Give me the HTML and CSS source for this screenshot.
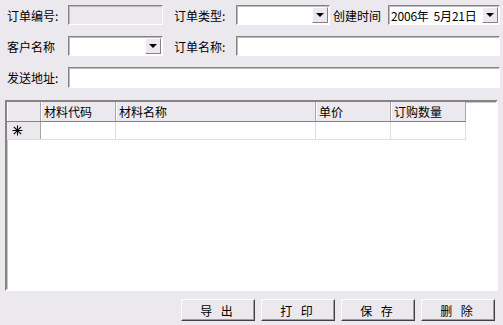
FILE: index.html
```html
<!DOCTYPE html>
<html lang="zh-CN">
<head>
    <meta charset="UTF-8">
    <title>订单</title>
    <link rel="stylesheet" href="styles.css">
</head>
<body>
    <div class="form">
        <div class="row">
            <span class="label">订单编号:</span>
            <span class="field disabled w-no"></span>
            <span class="label gap">订单类型:</span>
            <span class="field combo w-type"><span class="drop"></span></span>
            <span class="label short">创建时间</span>
            <span class="field combo w-date"><span class="value">2006年&nbsp;&nbsp;5月21日</span><span class="drop"></span></span>
        </div>
        <div class="row">
            <span class="label">客户名称</span>
            <span class="field combo w-no"><span class="drop"></span></span>
            <span class="label gap">订单名称:</span>
            <span class="field grow"></span>
        </div>
        <div class="row tall">
            <span class="label">发送地址:</span>
            <span class="field grow"></span>
        </div>
    </div>

    <div class="grid">
        <table>
            <tr class="head">
                <th class="rowhead"></th>
                <th class="c-code">材料代码</th>
                <th class="c-name">材料名称</th>
                <th class="c-price">单价</th>
                <th class="c-qty">订购数量</th>
            </tr>
            <tr class="newrow">
                <td class="rowhead">
                    <svg width="11" height="11" viewBox="0 0 11 11" class="star">
                        <path d="M5.5 0.5V10.5M0.5 5.5H10.5M1.8 1.8L9.2 9.2M9.2 1.8L1.8 9.2" stroke="#000" stroke-width="1.1" fill="none"/>
                    </svg>
                </td>
                <td></td>
                <td></td>
                <td></td>
                <td></td>
            </tr>
        </table>
    </div>

    <div class="buttons">
        <span class="btn">导&nbsp;出</span>
        <span class="btn">打&nbsp;印</span>
        <span class="btn">保&nbsp;存</span>
        <span class="btn">删&nbsp;除</span>
    </div>
</body>
</html>
```

FILE: styles.css
```css
body {
    margin: 0;
    width: 503px;
    height: 325px;
    background: #ebe9ed;
    font-family: "Noto Sans CJK SC", "DejaVu Sans", sans-serif;
    font-size: 12px;
    color: #000;
    overflow: hidden;
}
.form {
    padding: 5px 3px 0 7px;
}
.row {
    display: flex;
    align-items: center;
    height: 20px;
    margin-bottom: 11px;
}
.row.tall {
    height: 21px;
    margin-bottom: 0;
}
.label {
    width: 61px;
    white-space: nowrap;
}
.label.gap {
    margin-left: 11px;
    width: 62px;
}
.label.short {
    margin-left: 3px;
    width: 55px;
}
.field {
    box-sizing: border-box;
    height: 100%;
    background: #fff;
    border-style: solid;
    border-width: 1px;
    border-color: #858385 #fff #fff #858385;
    box-shadow: inset 1px 1px 0 #bdbbbd;
    display: flex;
    align-items: center;
}
.field.disabled {
    background: #ebe9ed;
}
.w-no {
    width: 95px;
}
.w-type {
    width: 94px;
}
.w-date {
    width: 112px;
}
.grow {
    flex: 1;
}
.combo {
    justify-content: space-between;
    padding: 1px 1px 1px 2px;
}
.value {
    letter-spacing: -0.2px;
}
.drop {
    box-sizing: border-box;
    margin-left: auto;
    width: 16px;
    height: 16px;
    background: #ebe9ed;
    border-style: solid;
    border-width: 1px;
    border-color: #fff #858385 #858385 #fff;
    display: flex;
    align-items: center;
    justify-content: center;
}
.drop::after {
    content: "";
    border-left: 4px solid transparent;
    border-right: 4px solid transparent;
    border-top: 4px solid #000;
}
.grid {
    box-sizing: border-box;
    margin: 12px 5px 0 5px;
    height: 191px;
    background: #fff;
    border-style: solid;
    border-width: 2px;
    border-color: #858385 #fff #fff #858385;
    box-shadow: inset 1px 1px 0 #c8c6c8;
}
table {
    border-collapse: collapse;
    table-layout: fixed;
}
th, td {
    padding: 0 0 0 3px;
    text-align: left;
    font-weight: normal;
    white-space: nowrap;
    overflow: hidden;
}
.head th {
    height: 19px;
    background: #ebe9ed;
    border-right: 1px solid #a8a6a8;
    border-bottom: 1px solid #858385;
    box-shadow: inset 1px 0 0 #fff;
    line-height: 16px;
}
.head th.rowhead {
    width: 30px;
}
.c-code {
    width: 71px;
}
.c-name {
    width: 196px;
}
.c-price {
    width: 71px;
}
.c-qty {
    width: 71px;
}
.newrow td {
    height: 17px;
    border-right: 1px solid #e0dee0;
    border-bottom: 1px solid #e0dee0;
}
.newrow td.rowhead {
    background: #ebe9ed;
    border-right: 1px solid #a8a6a8;
    padding-left: 5px;
    line-height: 0;
}
.buttons {
    display: flex;
    justify-content: flex-end;
    gap: 6px;
    margin: 8px 8px 0 0;
}
.btn {
    box-sizing: border-box;
    width: 74px;
    height: 22px;
    background: #ebe9ed;
    border-style: solid;
    border-width: 1px;
    border-color: #fff #404040 #404040 #fff;
    box-shadow: inset -1px -1px 0 #a09ea0;
    display: flex;
    align-items: center;
    justify-content: center;
    letter-spacing: 3px;
}
```
